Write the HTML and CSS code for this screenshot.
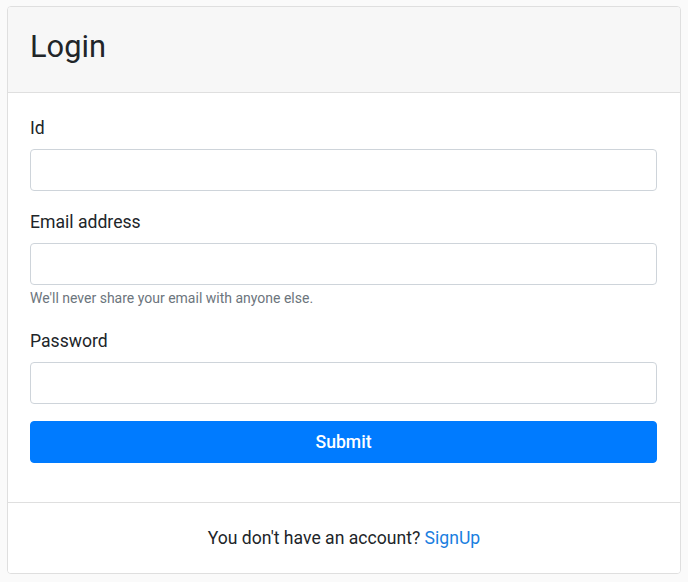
FILE: index.html
```html
<!DOCTYPE html>
<html lang="en">
<head>
<meta charset="utf-8">
<title>Login</title>
<link rel="stylesheet" href="styles.css">
</head>
<body>
<div class="card">
  <div class="card-header">
    <h2 class="title">Login</h2>
  </div>
  <form class="card-body">
    <div class="group">
      <label class="label" for="id">Id</label>
      <input class="input" id="id" type="text">
    </div>
    <div class="group">
      <label class="label" for="email">Email address</label>
      <input class="input" id="email" type="email">
      <small class="help">We'll never share your email with anyone else.</small>
    </div>
    <div class="group">
      <label class="label" for="pw">Password</label>
      <input class="input" id="pw" type="password">
    </div>
    <button class="btn" type="button">Submit</button>
  </form>
  <div class="card-footer">
    You don't have an account? <a class="link" href="#">SignUp</a>
  </div>
</div>
</body>
</html>
```
FILE: styles.css
```css
* { box-sizing: border-box; }
html, body { margin: 0; }
body {
  background: #fafafa;
  padding: 6px 7px;
  font-family: Roboto, "Liberation Sans", sans-serif;
  color: #212529;
}
.card {
  width: 674px;
  background: #fff;
  border: 1px solid #dfdfdf;
  border-radius: 4px;
  overflow: hidden;
}
.card-header {
  background: #f7f7f7;
  border-bottom: 1px solid #dfdfdf;
  padding: 20px 22px 25px;
}
.title {
  margin: 0;
  font-size: 30.8px;
  line-height: 40px;
  font-weight: 400;
  color: #212529;
}
.card-body {
  display: flex;
  flex-direction: column;
  padding: 22px 22px 22px 22px;
  margin: 0;
}
.group {
  display: flex;
  flex-direction: column;
  margin-bottom: 18px;
}
.group:nth-child(2) { margin-bottom: 20px; }
.group:nth-child(3) { margin-bottom: 17px; }
.label {
  font-size: 17.6px;
  line-height: 26px;
  margin-bottom: 8px;
  color: #212529;
}
.input {
  display: block;
  width: 627px;
  height: 42px;
  border: 1px solid #ced4da;
  border-radius: 4px;
  background: #fff;
  padding: 6px 13px;
  font-family: inherit;
  font-size: 17.6px;
  margin: 0;
}
.help {
  margin-top: 4px;
  font-size: 14px;
  line-height: 19px;
  color: #6c757d;
}
.btn {
  width: 627px;
  height: 42px;
  margin: 0 0 17px;
  border: 1px solid #007bff;
  border-radius: 4px;
  background: #007bff;
  color: #fff;
  font-family: inherit;
  font-size: 17.6px;
  font-weight: 500;
  line-height: 26px;
  padding: 0;
}
.card-footer {
  border-top: 1px solid #dfdfdf;
  background: #fff;
  padding: 22px 22px 22px;
  text-align: center;
  font-size: 17.6px;
  line-height: 26px;
  color: #212529;
}
.link {
  color: #1a7ee0;
  text-decoration: none;
}
```
